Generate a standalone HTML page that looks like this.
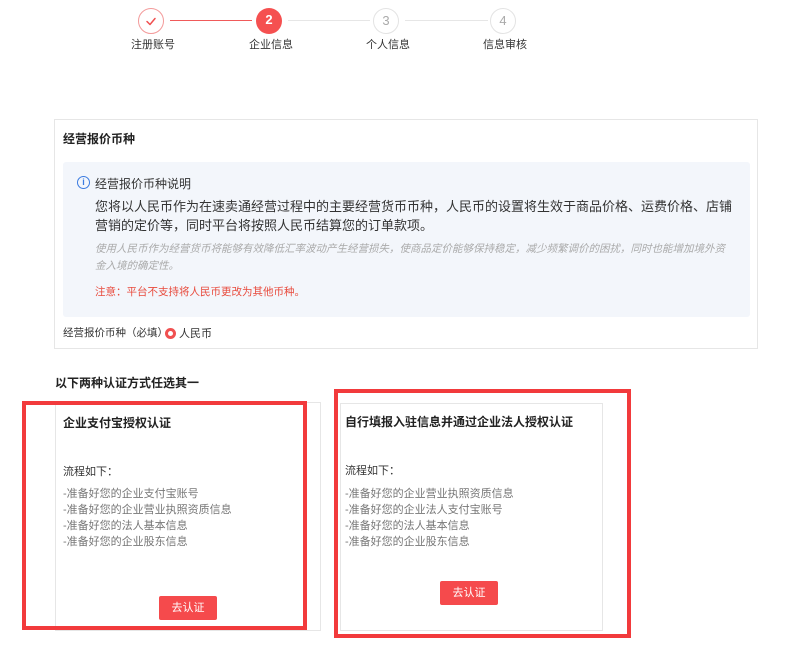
<!DOCTYPE html>
<html><head><meta charset="utf-8"><style>
*{margin:0;padding:0;box-sizing:border-box}
body{width:790px;height:647px;background:#fff;position:relative;overflow:hidden;font-family:"Liberation Sans","Noto Sans CJK SC",sans-serif;color:#333}
.a{position:absolute;white-space:nowrap}
.c{position:absolute;width:26px;height:26px;border-radius:50%;text-align:center;line-height:24px;font-size:13px}
.ln{position:absolute;height:1px;top:20px}
.st{position:absolute;top:36px;font-size:11px;color:#333}
.card{position:absolute;border:1px solid #e6e6e6;background:#fff}
.rb{position:absolute;border:4px solid #f23a3c}
.btn{position:absolute;background:#f54a4c;color:#fff;font-size:11px;text-align:center;line-height:24px;border-radius:2px;width:58px;height:24px}
.li{font-size:11px;color:#777;line-height:16px}
</style></head><body>
<div class="c" style="left:138px;top:8px;border:1px solid #f39a9a"><svg width="24" height="24" viewBox="0 0 24 24" style="position:absolute;left:0;top:0"><path d="M8 12.5l3 3 5-6" fill="none" stroke="#f05050" stroke-width="1.5" stroke-linecap="round" stroke-linejoin="round"/></svg></div>
<div class="ln" style="left:170px;width:82px;background:#f05a5a"></div>
<div class="c" style="left:256px;top:8px;background:#f55050;color:#fff;font-weight:bold">2</div>
<div class="ln" style="left:288px;width:82px;background:#e6e6e6"></div>
<div class="c" style="left:373px;top:8px;border:1px solid #e3e3e3;color:#aaa">3</div>
<div class="ln" style="left:405px;width:83px;background:#e6e6e6"></div>
<div class="c" style="left:490px;top:8px;border:1px solid #e3e3e3;color:#aaa">4</div>
<div class="st" style="left:131px">注册账号</div>
<div class="st" style="left:249px">企业信息</div>
<div class="st" style="left:366px">个人信息</div>
<div class="st" style="left:483px">信息审核</div>

<div class="card" style="left:54px;top:119px;width:704px;height:230px"></div>
<div class="a" style="left:63px;top:130px;font-size:12px;font-weight:bold;color:#222">经营报价币种</div>
<div class="a" style="left:63px;top:162px;width:687px;height:155px;background:#f3f6fb;border-radius:3px"></div>
<div class="a" style="left:77px;top:176px;width:13px;height:13px;border:1px solid #3b7be0;border-radius:50%;color:#3b7be0;font-size:9px;text-align:center;line-height:11px;font-weight:bold">i</div>
<div class="a" style="left:95px;top:175px;font-size:12px;color:#333">经营报价币种说明</div>
<div class="a" style="left:95px;top:197px;font-size:13px;color:#333;line-height:19px">您将以人民币作为在速卖通经营过程中的主要经营货币币种，人民币的设置将生效于商品价格、运费价格、店铺<br>营销的定价等，同时平台将按照人民币结算您的订单款项。</div>
<div class="a" style="left:95px;top:241px;font-size:10.5px;color:#aaa;font-style:italic;line-height:17px">使用人民币作为经营货币将能够有效降低汇率波动产生经营损失，使商品定价能够保持稳定，减少频繁调价的困扰，同时也能增加境外资<br>金入境的确定性。</div>
<div class="a" style="left:95px;top:284px;font-size:10.5px;color:#e84a3c">注意：平台不支持将人民币更改为其他币种。</div>
<div class="a" style="left:63px;top:325px;font-size:10.5px;color:#333">经营报价币种（必填）</div>
<div class="a" style="left:165px;top:328px;width:11px;height:11px;border-radius:50%;border:3px solid #f05050;background:#fff"></div>
<div class="a" style="left:179px;top:325px;font-size:11px;color:#333">人民币</div>

<div class="a" style="left:55px;top:374px;font-size:12px;font-weight:bold;color:#222">以下两种认证方式任选其一</div>

<div class="card" style="left:55px;top:402px;width:266px;height:229px"></div>
<div class="rb" style="left:22px;top:401px;width:285px;height:229px"></div>
<div class="a" style="left:63px;top:414px;font-size:12px;font-weight:bold;color:#222">企业支付宝授权认证</div>
<div class="a" style="left:63px;top:463px;font-size:11px;color:#333">流程如下：</div>
<div class="a li" style="left:63px;top:486px">-准备好您的企业支付宝账号<br>-准备好您的企业营业执照资质信息<br>-准备好您的法人基本信息<br>-准备好您的企业股东信息</div>
<div class="btn" style="left:159px;top:596px">去认证</div>

<div class="card" style="left:340px;top:403px;width:263px;height:228px"></div>
<div class="rb" style="left:334px;top:389px;width:297px;height:249px"></div>
<div class="a" style="left:345px;top:413px;font-size:12px;font-weight:bold;color:#222">自行填报入驻信息并通过企业法人授权认证</div>
<div class="a" style="left:345px;top:462px;font-size:11px;color:#333">流程如下：</div>
<div class="a li" style="left:345px;top:486px">-准备好您的企业营业执照资质信息<br>-准备好您的企业法人支付宝账号<br>-准备好您的法人基本信息<br>-准备好您的企业股东信息</div>
<div class="btn" style="left:440px;top:581px">去认证</div>
</body></html>
